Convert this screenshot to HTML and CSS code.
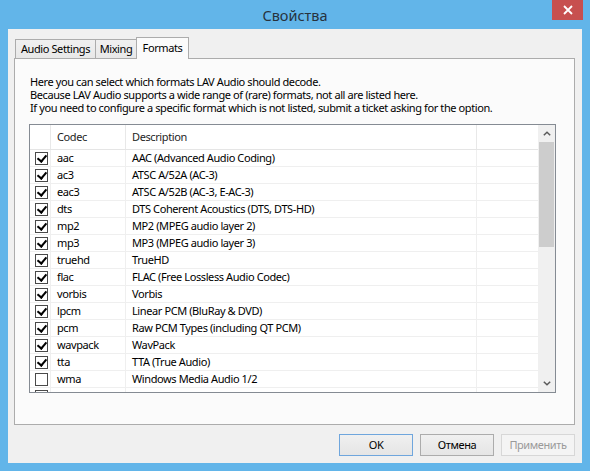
FILE: index.html
```html
<!DOCTYPE html>
<html lang="ru">
<head>
<meta charset="utf-8">
<title>Свойства</title>
<link rel="stylesheet" href="styles.css">
</head>
<body>
<div class="window">
  <div class="titlebar">
    <span class="tb-left"></span>
    <div class="title">Свойства</div>
    <div class="tb-right">
      <div class="close">
        <svg width="10" height="10" viewBox="0 0 10 10"><path d="M1 1L9 9M9 1L1 9" stroke="#fff" stroke-width="1.8" fill="none"/></svg>
      </div>
    </div>
  </div>
  <div class="client">
    <div class="tabs">
      <div class="tab tab-audio">Audio Settings</div>
      <div class="tab tab-mixing">Mixing</div>
      <div class="tab tab-formats active">Formats</div>
    </div>
    <div class="panel">
      <p class="intro">Here you can select which formats LAV Audio should decode.<br>Because LAV Audio supports a wide range of (rare) formats, not all are listed here.<br>If you need to configure a specific format which is not listed, submit a ticket asking for the option.</p>
      <div class="list">
        <div class="table">
          <div class="row header">
            <div class="cell"></div>
            <div class="cell">Codec</div>
            <div class="cell">Description</div>
            <div class="cell"></div>
          </div>
          <div class="row"><div class="cell chk"><span class="cb on"></span></div><div class="cell">aac</div><div class="cell">AAC (Advanced Audio Coding)</div><div class="cell"></div></div>
          <div class="row"><div class="cell chk"><span class="cb on"></span></div><div class="cell">ac3</div><div class="cell">ATSC A/52A (AC-3)</div><div class="cell"></div></div>
          <div class="row"><div class="cell chk"><span class="cb on"></span></div><div class="cell">eac3</div><div class="cell">ATSC A/52B (AC-3, E-AC-3)</div><div class="cell"></div></div>
          <div class="row"><div class="cell chk"><span class="cb on"></span></div><div class="cell">dts</div><div class="cell">DTS Coherent Acoustics (DTS, DTS-HD)</div><div class="cell"></div></div>
          <div class="row"><div class="cell chk"><span class="cb on"></span></div><div class="cell">mp2</div><div class="cell">MP2 (MPEG audio layer 2)</div><div class="cell"></div></div>
          <div class="row"><div class="cell chk"><span class="cb on"></span></div><div class="cell">mp3</div><div class="cell">MP3 (MPEG audio layer 3)</div><div class="cell"></div></div>
          <div class="row"><div class="cell chk"><span class="cb on"></span></div><div class="cell">truehd</div><div class="cell">TrueHD</div><div class="cell"></div></div>
          <div class="row"><div class="cell chk"><span class="cb on"></span></div><div class="cell">flac</div><div class="cell">FLAC (Free Lossless Audio Codec)</div><div class="cell"></div></div>
          <div class="row"><div class="cell chk"><span class="cb on"></span></div><div class="cell">vorbis</div><div class="cell">Vorbis</div><div class="cell"></div></div>
          <div class="row"><div class="cell chk"><span class="cb on"></span></div><div class="cell">lpcm</div><div class="cell">Linear PCM (BluRay &amp; DVD)</div><div class="cell"></div></div>
          <div class="row"><div class="cell chk"><span class="cb on"></span></div><div class="cell">pcm</div><div class="cell">Raw PCM Types (including QT PCM)</div><div class="cell"></div></div>
          <div class="row"><div class="cell chk"><span class="cb on"></span></div><div class="cell">wavpack</div><div class="cell">WavPack</div><div class="cell"></div></div>
          <div class="row"><div class="cell chk"><span class="cb on"></span></div><div class="cell">tta</div><div class="cell">TTA (True Audio)</div><div class="cell"></div></div>
          <div class="row"><div class="cell chk"><span class="cb"></span></div><div class="cell">wma</div><div class="cell">Windows Media Audio 1/2</div><div class="cell"></div></div>
          <div class="row"><div class="cell chk"><span class="cb"></span></div><div class="cell"></div><div class="cell"></div><div class="cell"></div></div>
        </div>
        <div class="scrollbar">
          <div class="sb-btn">
            <svg width="8" height="5" viewBox="0 0 8 5"><path d="M0.8 4.2L4 1.2L7.2 4.2" stroke="#5a5a5a" stroke-width="1.5" fill="none"/></svg>
          </div>
          <div class="sb-thumb"></div>
          <div class="sb-track"></div>
          <div class="sb-btn">
            <svg width="8" height="5" viewBox="0 0 8 5"><path d="M0.8 0.8L4 3.8L7.2 0.8" stroke="#5a5a5a" stroke-width="1.5" fill="none"/></svg>
          </div>
        </div>
      </div>
    </div>
    <div class="buttons">
      <div class="btn default">OK</div>
      <div class="btn">Отмена</div>
      <div class="btn disabled">Применить</div>
    </div>
  </div>
</div>
</body>
</html>
```
FILE: styles.css
```css
* { box-sizing: border-box; }
html, body { margin: 0; padding: 0; }
body {
  width: 590px;
  height: 471px;
  overflow: hidden;
  font-family: "Noto Sans", "Open Sans", sans-serif;
  font-size: 11px;
  letter-spacing: -0.4px;
  color: #000;
}
.window {
  width: 590px;
  height: 471px;
  background: #62b5e9;
  display: flex;
  flex-direction: column;
  padding: 0 8px 8px 8px;
}
.titlebar {
  height: 29px;
  display: grid;
  grid-template-columns: 1fr auto 1fr;
  align-items: start;
}
.title {
  font-size: 14.5px;
  letter-spacing: 0;
  line-height: 30px;
  color: #27323d;
}
.tb-right {
  display: flex;
  justify-content: flex-end;
}
.close {
  width: 31px;
  height: 20px;
  margin-right: -1px;
  background: #c7504f;
  display: flex;
  align-items: center;
  justify-content: center;
}
.client {
  flex: 1;
  background: #f0f0f0;
  padding: 8px 7px 7px 6px;
  display: flex;
  flex-direction: column;
}
.tabs {
  display: flex;
  align-items: flex-end;
  height: 22px;
  margin: 0 0 -1px 1px;
  position: relative;
  z-index: 1;
}
.tab {
  height: 19px;
  margin-bottom: 1px;
  border: 1px solid #acacac;
  border-bottom: none;
  background: linear-gradient(#f0f0f0, #e8e8e8);
  text-align: center;
  line-height: 18px;
  white-space: nowrap;
}
.tab + .tab { margin-left: -1px; }
.tab-audio { width: 81px; }
.tab-mixing { width: 42px; }
.tab-formats { width: 53px; }
.tab.active {
  height: 22px;
  margin-bottom: 0;
  background: #fbfbfb;
  line-height: 19px;
  position: relative;
  z-index: 2;
}
.panel {
  height: 367px;
  border: 1px solid #acacac;
  background: #fbfbfb;
  padding: 16px 0 0 14px;
}
.intro {
  margin: 0 0 10px 1px;
  line-height: 13px;
  white-space: nowrap;
}
.list {
  width: 527px;
  height: 269px;
  border: 1px solid #858b93;
  background: #fff;
  display: flex;
  overflow: hidden;
}
.table {
  flex: 1;
  overflow: hidden;
}
.row {
  display: grid;
  grid-template-columns: 21px 75px 351px 1fr;
  height: 17px;
  border-bottom: 1px solid #efefef;
  line-height: 16px;
  white-space: nowrap;
}
.cell {
  border-right: 1px solid #efefef;
  padding-left: 6px;
  overflow: hidden;
}
.cell:last-child { border-right: none; }
.row.header {
  height: 25px;
  line-height: 24px;
  border-bottom-color: #e5e5e5;
  color: #1e1e1e;
}
.row.header .cell { border-right-color: #e8e8e8; }
.cell.chk {
  padding-left: 5px;
  display: flex;
  align-items: center;
}
.cb {
  width: 13px;
  height: 13px;
  border: 1px solid #4a4a4a;
  background: #fff;
  display: block;
  position: relative;
}
.cb.on::after {
  content: "";
  position: absolute;
  left: 3px;
  top: 0px;
  width: 4px;
  height: 7px;
  border: solid #000;
  border-width: 0 2px 2px 0;
  transform: rotate(40deg);
}
.scrollbar {
  width: 17px;
  background: #f0f0f0;
  display: flex;
  flex-direction: column;
}
.sb-btn {
  height: 17px;
  display: flex;
  align-items: center;
  justify-content: center;
}
.sb-thumb {
  height: 105px;
  margin: 0 1px;
  background: #cdcdcd;
}
.sb-track { flex: 1; }
.buttons {
  margin-top: 9px;
  display: flex;
  justify-content: flex-end;
  gap: 7px;
}
.btn {
  width: 74px;
  height: 22px;
  border: 1px solid #acacac;
  background: linear-gradient(#f0f0f0, #e5e5e5);
  text-align: center;
  line-height: 20px;
  color: #000;
}
.btn.default { border-color: #6fa6dd; }
.btn.disabled {
  border-color: #d7d7d7;
  background: #f4f4f4;
  color: #9a9a9a;
}
```
